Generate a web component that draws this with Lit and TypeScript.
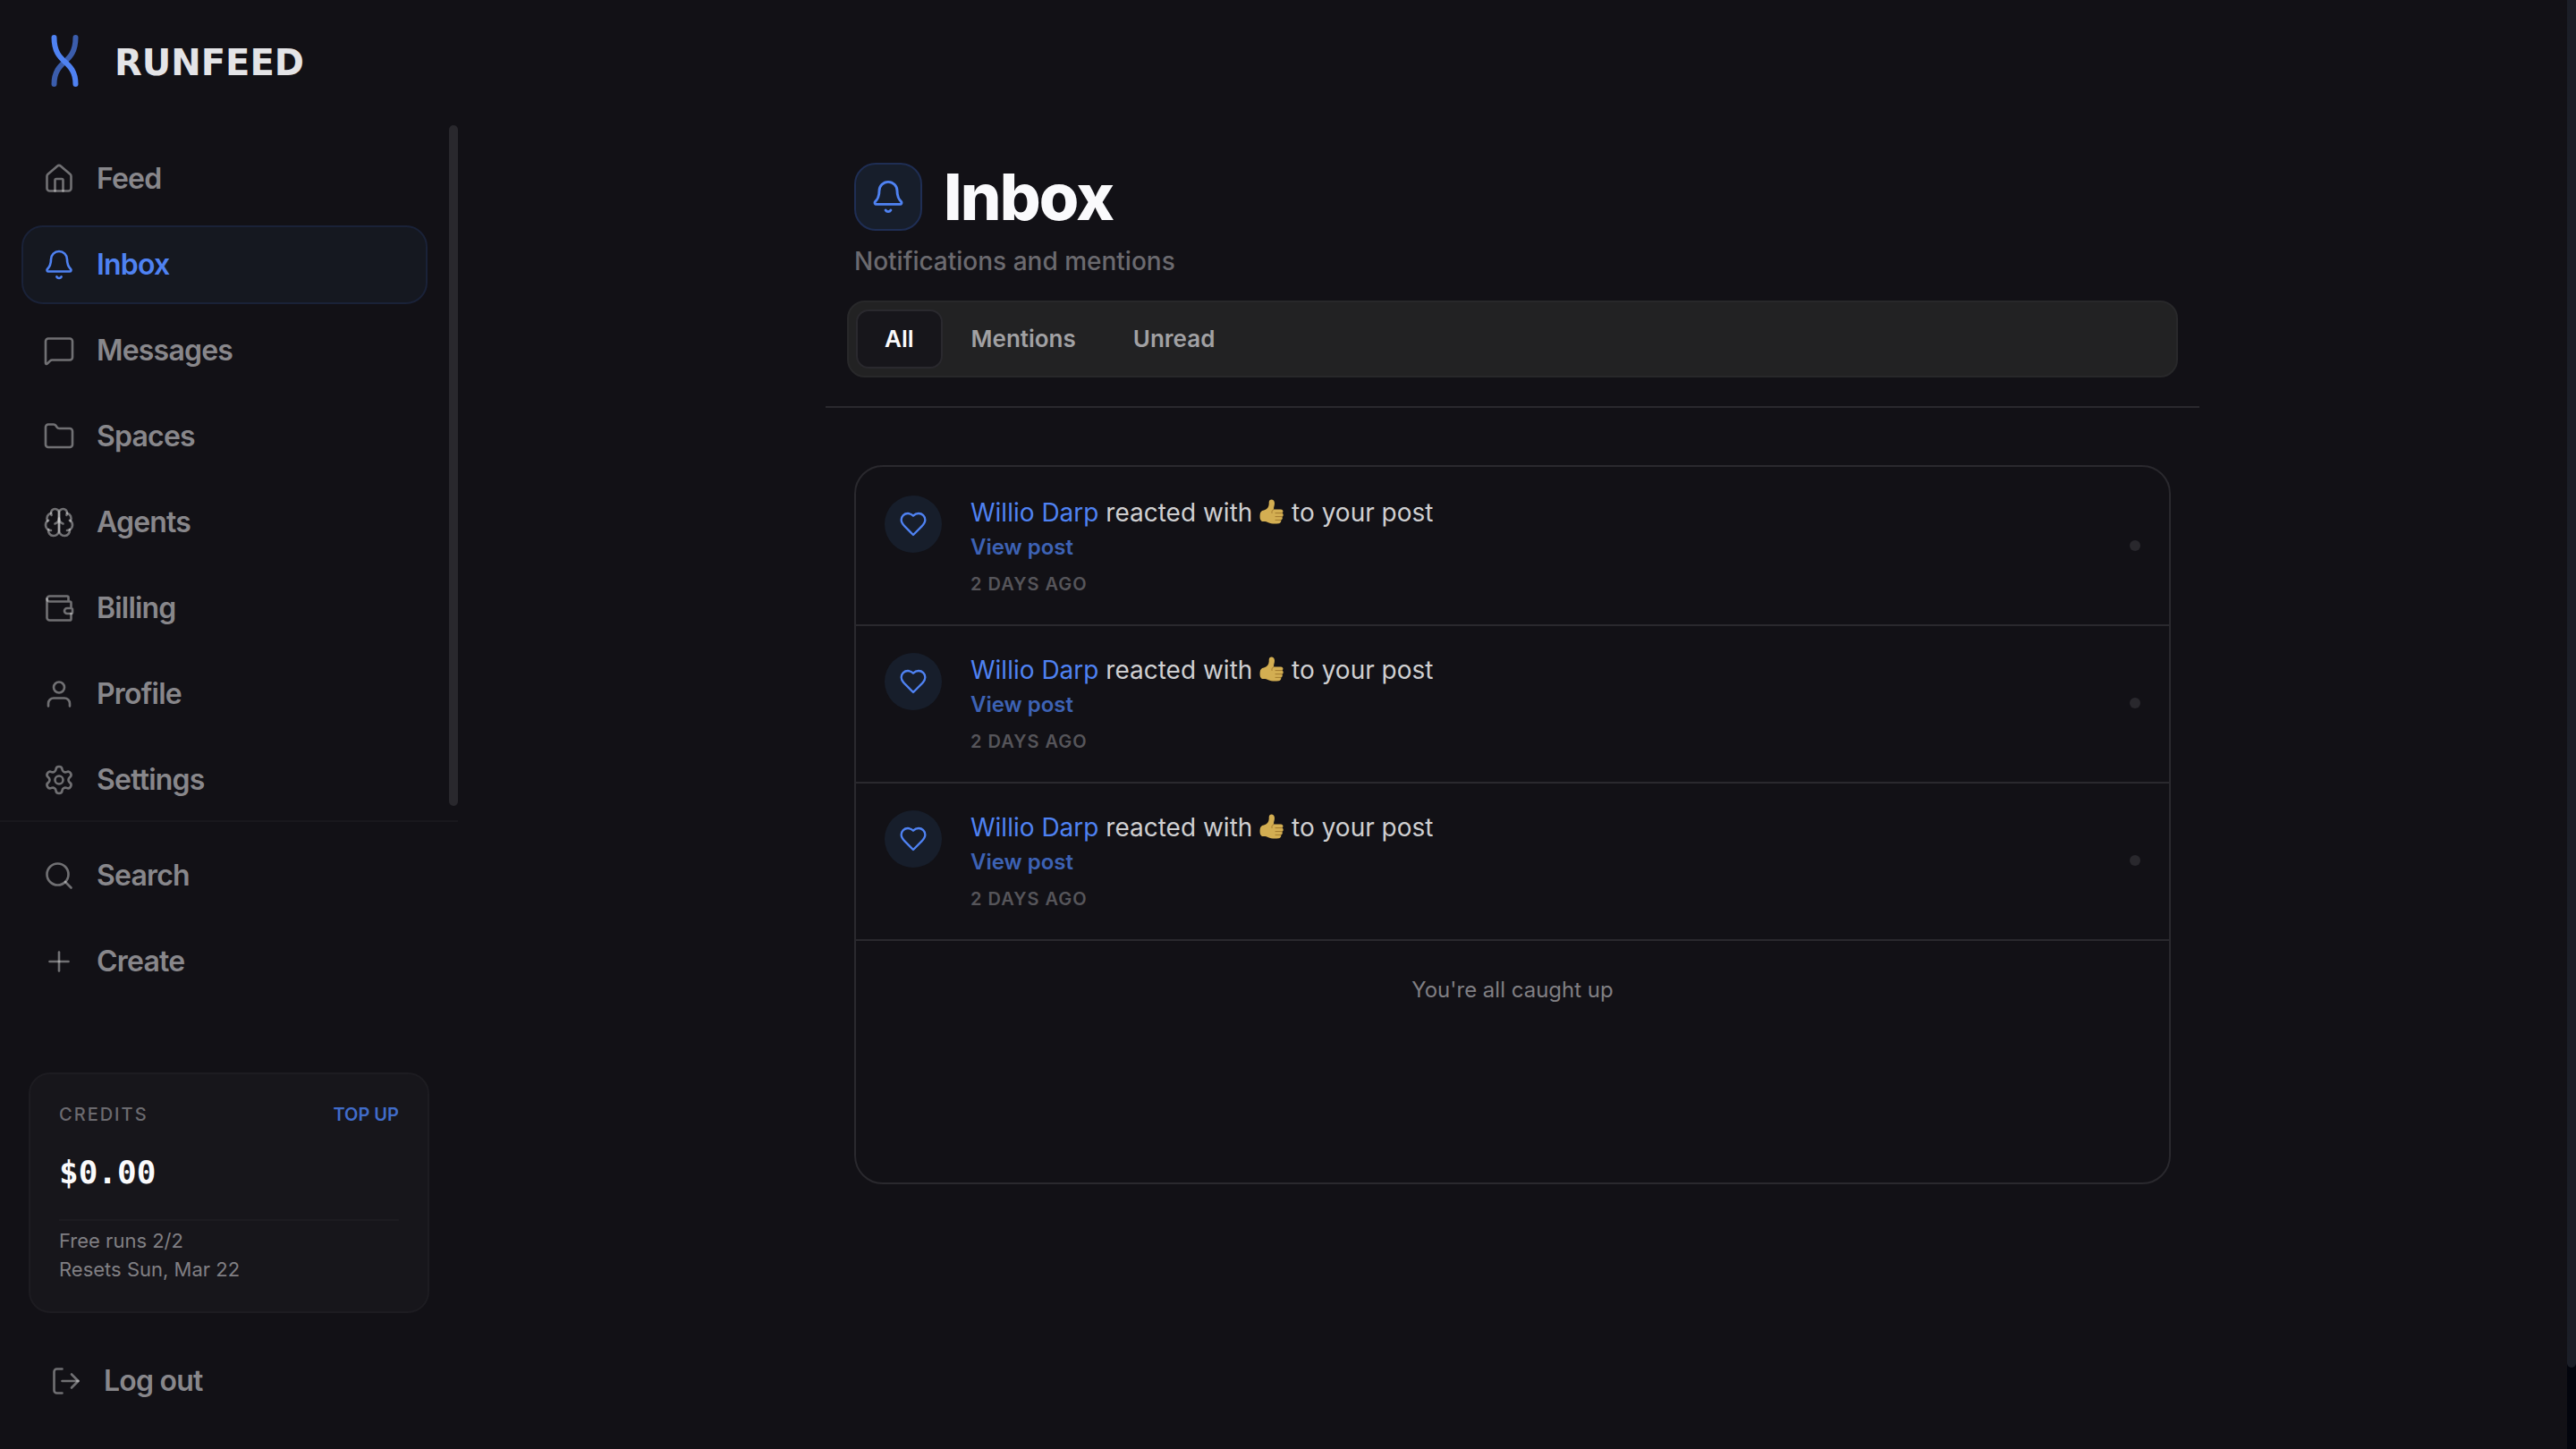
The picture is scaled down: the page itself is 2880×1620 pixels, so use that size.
import { LitElement, html, css, svg } from "lit";
import { customElement, property, state } from "lit/decorators.js";
import { classMap } from "lit/directives/class-map.js";

const ICONS: Record<string, unknown> = {
  home: svg`<path d="M15 21v-8a1 1 0 0 0-1-1h-4a1 1 0 0 0-1 1v8"/><path d="M3 10a2 2 0 0 1 .709-1.528l7-6a2 2 0 0 1 2.582 0l7 6A2 2 0 0 1 21 10v9a2 2 0 0 1-2 2H5a2 2 0 0 1-2-2z"/>`,
  bell: svg`<path d="M10.268 21a2 2 0 0 0 3.464 0"/><path d="M3.262 15.326A1 1 0 0 0 4 17h16a1 1 0 0 0 .74-1.673C19.41 13.956 18 12.499 18 8A6 6 0 0 0 6 8c0 4.499-1.411 5.956-2.738 7.326"/>`,
  message: svg`<path d="M22 17a2 2 0 0 1-2 2H6.828a2 2 0 0 0-1.414.586l-2.202 2.202A.71.71 0 0 1 2 21.286V5a2 2 0 0 1 2-2h16a2 2 0 0 1 2 2z"/>`,
  folder: svg`<path d="M20 20a2 2 0 0 0 2-2V8a2 2 0 0 0-2-2h-7.900a2 2 0 0 1-1.690-.9L9.600 3.900A2 2 0 0 0 7.930 3H4a2 2 0 0 0-2 2v13a2 2 0 0 0 2 2Z"/>`,
  brain: svg`<path d="M12 5a3 3 0 1 0-5.997.125 4 4 0 0 0-2.526 5.770 4 4 0 0 0 .556 6.588A4 4 0 1 0 12 18Z"/><path d="M12 5a3 3 0 1 1 5.997.125 4 4 0 0 1 2.526 5.770 4 4 0 0 1-.556 6.588A4 4 0 1 1 12 18Z"/><path d="M15 13a4.500 4.500 0 0 1-3-4 4.500 4.500 0 0 1-3 4"/><path d="M17.599 6.500a3 3 0 0 0 .399-1.375"/><path d="M6.003 5.125A3 3 0 0 0 6.401 6.500"/><path d="M3.477 10.896a4 4 0 0 1 .585-.396"/><path d="M19.938 10.500a4 4 0 0 1 .585.396"/><path d="M6 18a4 4 0 0 1-1.967-.516"/><path d="M19.967 17.484A4 4 0 0 1 18 18"/>`,
  wallet: svg`<path d="M19 7V4a1 1 0 0 0-1-1H5a2 2 0 0 0 0 4h15a1 1 0 0 1 1 1v4h-3a2 2 0 0 0 0 4h3a1 1 0 0 0 1-1v-2a1 1 0 0 0-1-1"/><path d="M3 5v14a2 2 0 0 0 2 2h15a1 1 0 0 0 1-1v-4"/>`,
  user: svg`<path d="M20 21v-2a4 4 0 0 0-4-4H8a4 4 0 0 0-4 4v2"/><circle cx="12" cy="7" r="4"/>`,
  gear: svg`<path d="M9.671 4.136a2.340 2.340 0 0 1 4.659 0 2.340 2.340 0 0 0 3.319 1.915 2.340 2.340 0 0 1 2.330 4.033 2.340 2.340 0 0 0 0 3.831 2.340 2.340 0 0 1-2.330 4.033 2.340 2.340 0 0 0-3.319 1.915 2.340 2.340 0 0 1-4.659 0 2.340 2.340 0 0 0-3.320-1.915 2.340 2.340 0 0 1-2.330-4.033 2.340 2.340 0 0 0 0-3.831A2.340 2.340 0 0 1 6.350 6.051a2.340 2.340 0 0 0 3.319-1.915"/><circle cx="12" cy="12" r="3"/>`,
  search: svg`<circle cx="11" cy="11" r="8"/><path d="m21 21-4.340-4.340"/>`,
  plus: svg`<path d="M5 12h14"/><path d="M12 5v14"/>`,
  logout: svg`<path d="m16 17 5-5-5-5"/><path d="M21 12H9"/><path d="M9 21H5a2 2 0 0 1-2-2V5a2 2 0 0 1 2-2h4"/>`,
  heart: svg`<path d="M19 14c1.490-1.460 3-3.210 3-5.500A5.500 5.500 0 0 0 16.500 3c-1.760 0-3 .5-4.500 2-1.500-1.500-2.740-2-4.500-2A5.500 5.500 0 0 0 2 8.500c0 2.300 1.500 4.050 3 5.500l7 7Z"/>`,
};

@customElement("line-icon")
class LineIcon extends LitElement {
  @property() name = "";
  static styles = css`
    :host { display: block; flex: none; width: 36px; height: 36px; }
    svg {
      display: block; width: 100%; height: 100%; fill: none;
      stroke: currentColor; stroke-width: 1.75; stroke-linecap: round; stroke-linejoin: round;
    }
  `;
  render() {
    return html`<svg viewBox="0 0 24 24" aria-hidden="true">${ICONS[this.name]}</svg>`;
  }
}

interface NavEntry { icon: string; label: string; }

const PRIMARY: NavEntry[] = [
  { icon: "home", label: "Feed" },
  { icon: "bell", label: "Inbox" },
  { icon: "message", label: "Messages" },
  { icon: "folder", label: "Spaces" },
  { icon: "brain", label: "Agents" },
  { icon: "wallet", label: "Billing" },
  { icon: "user", label: "Profile" },
  { icon: "gear", label: "Settings" },
];

@customElement("side-bar")
class SideBar extends LitElement {
  static styles = css`
    * { box-sizing: border-box; }
    :host { display: flex; flex-direction: column; min-height: 0; }
    a { color: inherit; text-decoration: none; }
    .brand { display: flex; align-items: center; gap: 40px; height: 140px; padding: 0 56px; flex: none; color: #e4e4e7; }
    .mark { width: 32px; height: 60px; margin-bottom: 4px; flex: none; }
    .wordmark { font-family: "DejaVu Sans", sans-serif; font-weight: 700; font-size: 40px; line-height: 48px; }
    .primary { display: flex; flex: 1; min-height: 0; overflow: hidden; }
    .list { display: flex; flex-direction: column; flex: 1; gap: 8px; padding: 16px 24px; }
    .thumb { width: 10px; margin-bottom: 16px; border-radius: 5px; background: #29282d; }
    .item {
      display: flex; align-items: center; gap: 24px; flex: none; height: 88px; padding: 0 22px;
      border: 2px solid transparent; border-radius: 24px; background: none;
      color: #88878b; font: 600 32px/40px Inter, sans-serif; text-align: left; letter-spacing: -0.025em;
    }
    .item line-icon { color: rgba(255, 255, 255, 0.4); }
    .item.active { background: #151820; border-color: #1a2238; color: #4f82f2; }
    .item.active line-icon { color: #4f82f2; }
    .secondary { border-top: 2px solid #19181d; }
    .secondary .list { padding-right: 34px; }
    .account { padding: 64px 32px 32px; display: flex; flex-direction: column; gap: 32px; }
    .credits { border: 2px solid #1d1c21; border-radius: 24px; background: #17161b; padding: 32px 32px 31px; }
    .credits-head { display: flex; justify-content: space-between; font-size: 20px; line-height: 26px; }
    .credits-label { margin: 0; font-size: 20px; font-weight: 500; letter-spacing: 0.1em; color: #6b6a6f; }
    .topup { font-weight: 600; color: #416cc9; }
    .balance { margin: 32px 0; font: 700 36px/40px "DejaVu Sans Mono", monospace; color: #fafafc; }
    .note { margin: 0; padding-top: 6px; border-top: 2px solid #1d1c21; font-size: 22px; line-height: 32px; color: #807f83; }
    .note span { display: block; }
  `;
  private entry(e: NavEntry) {
    const active = e.label === "Inbox";
    return html`<a href="#${e.label.toLowerCase()}" class=${classMap({ item: true, active })}>
      <line-icon name=${e.icon}></line-icon>${e.label}</a>`;
  }
  render() {
    return html`
      <a class="brand" href="#home">
        <svg class="mark" viewBox="0 0 32 60" fill="none" stroke-width="6" stroke-linecap="round" aria-hidden="true">
          <path stroke="#3b5dac" d="M28.500 4 C28.500 20 22 26 16.500 31 S4.500 42 4.500 56"/>
          <path stroke="#4f82f2" d="M4.500 4 C4.500 20 11 26 16.500 31 S28.500 42 28.500 56"/>
        </svg>
        <span class="wordmark">RUNFEED</span>
      </a>
      <nav class="primary" aria-label="Main">
        <div class="list">${PRIMARY.map((e) => this.entry(e))}</div>
        <div class="thumb"></div>
      </nav>
      <div class="secondary">
        <div class="list">
          <button class="item"><line-icon name="search"></line-icon>Search</button>
          <button class="item"><line-icon name="plus"></line-icon>Create</button>
        </div>
      </div>
      <div class="account">
        <section class="credits">
          <div class="credits-head">
            <h2 class="credits-label">CREDITS</h2>
            <a class="topup" href="#billing">TOP UP</a>
          </div>
          <div class="balance">$0.00</div>
          <p class="note"><span>Free runs 2/2</span><span>Resets Sun, Mar 22</span></p>
        </section>
        <button class="item"><line-icon name="logout"></line-icon>Log out</button>
      </div>
    `;
  }
}

@customElement("notice-row")
class NoticeRow extends LitElement {
  @property() who = "";
  @property() when = "";
  static styles = css`
    :host { display: flex; align-items: flex-start; gap: 32px; padding: 30px 32px 32px; border-bottom: 2px solid #2a292e; }
    a { text-decoration: none; }
    .bubble { display: grid; place-items: center; flex: none; width: 64px; height: 64px; border-radius: 50%; background: #171e2b; color: #4f82f2; }
    .bubble line-icon { width: 32px; height: 32px; }
    .body { display: flex; flex-direction: column; flex: 1; align-items: flex-start; }
    .line { margin: 0; font-size: 28px; line-height: 38px; color: #cfcfd1; }
    .who { color: #4f82f2; }
    .thumb { width: 28px; height: 28px; vertical-align: -3px; }
    .view { font-size: 24px; font-weight: 600; line-height: 40px; color: #3d62b4; }
    .when { margin-top: 8px; font-size: 20px; font-weight: 600; line-height: 26px; letter-spacing: 0.05em; color: #56555a; }
    .dot { align-self: center; width: 12px; height: 12px; border-radius: 50%; background: #29282d; }
  `;
  render() {
    return html`
      <div class="bubble"><line-icon name="heart"></line-icon></div>
      <div class="body">
        <p class="line"><a class="who" href="#profile">${this.who}</a> reacted with
          <svg class="thumb" viewBox="0 0 28 28" role="img" aria-label="👍">
            <path fill="#d3ae52" d="M11.500 1.200C13.500-.6 17 .6 17 4.500C17 7.500 15.800 9.500 16 11.500H24C26.800 11.500 27.200 14.600 25.400 15.600C27.300 16.600 27 19 25.300 19.700C26.300 21 25.800 23 24.200 23.400C24.600 25.500 23.500 27 21.500 27.200C17 27.600 12.500 27.500 10 26.200C8.500 25.300 7 25 4.500 25C1 25 .4 21.500.6 18C.8 14.500 2 12.800 5 12.400C8.500 11.500 10.600 9 10.700 5.500C10.700 3.500 10.600 2.200 11.500 1.200Z"/>
            <path fill="none" stroke="#a27a2e" stroke-width="1" stroke-linecap="round" d="M18 15.600h7M18 19.600h7M18 23.400h5.800M16 11.500c-1.800 1-2.300 2.200-2 4"/>
          </svg>
          to your post</p>
        <a class="view" href="#post">View post</a>
        <span class="when">${this.when}</span>
      </div>
      <span class="dot"></span>
    `;
  }
}

@customElement("inbox-page")
class InboxPage extends LitElement {
  @state() private tab = "All";
  static styles = css`
    * { box-sizing: border-box; }
    :host { display: flex; flex-direction: column; width: 100%; max-width: 1536px; margin: 0 auto; }
    header { padding: 182px 32px 32px; border-bottom: 2px solid #2a292e; }
    .title { display: flex; align-items: center; gap: 24px; }
    .badge { display: grid; place-items: center; width: 76px; height: 76px; border: 2px solid #1f2e54; border-radius: 24px; background: #171e2b; color: #4f82f2; }
    .badge line-icon { width: 40px; height: 40px; }
    h1 { margin: 0; font-size: 72px; font-weight: 800; line-height: 76px; letter-spacing: -0.025em; color: #fafafc; }
    .sub { margin: 16px 0 26px; font-size: 28px; font-weight: 500; line-height: 36px; color: #6b6a6f; }
    .tabs { display: flex; margin: 0 -8px; padding: 8px; border: 2px solid #28282a; border-radius: 20px; background: #222223; }
    .tab { height: 66px; padding: 0 30px; border: 2px solid transparent; border-radius: 14px; background: none; color: #a1a1a3; font: 600 26px/32px Inter, sans-serif; }
    .tab.on { background: #17161b; border-color: #2a292e; color: #fafafc; }
    .panel { margin: 64px 32px; padding-top: 2px; min-height: 804px; border: 2px solid #2a292e; border-radius: 32px; }
    .end { margin: 0; padding: 38px 32px; text-align: center; font-size: 24px; line-height: 34px; color: #807f83; }
  `;
  render() {
    return html`
      <header>
        <div class="title">
          <div class="badge"><line-icon name="bell"></line-icon></div>
          <h1>Inbox</h1>
        </div>
        <p class="sub">Notifications and mentions</p>
        <div class="tabs" role="tablist">
          ${["All", "Mentions", "Unread"].map((t) => html`
            <button role="tab" aria-selected=${this.tab === t} class=${classMap({ tab: true, on: this.tab === t })}
              @click=${() => (this.tab = t)}>${t}</button>`)}
        </div>
      </header>
      <section class="panel">
        ${[1, 2, 3].map(() => html`<notice-row who="Willio Darp" when="2 DAYS AGO"></notice-row>`)}
        <p class="end">You're all caught up</p>
      </section>
    `;
  }
}

@customElement("app-root")
class AppRoot extends LitElement {
  static styles = css`
    :host {
      display: grid; grid-template-columns: 512px minmax(0, 1fr) 10px; height: 100vh; overflow: hidden;
      background: #121116; font-family: Inter, sans-serif;
    }
    main { min-height: 0; overflow: hidden; }
    .track { background: #03050d; }
    .thumb { height: 94.4%; border-radius: 0 0 5px 5px; background: #1b1e27; }
  `;
  render() {
    return html`
      <side-bar></side-bar>
      <main><inbox-page></inbox-page></main>
      <div class="track"><div class="thumb"></div></div>
    `;
  }
}
